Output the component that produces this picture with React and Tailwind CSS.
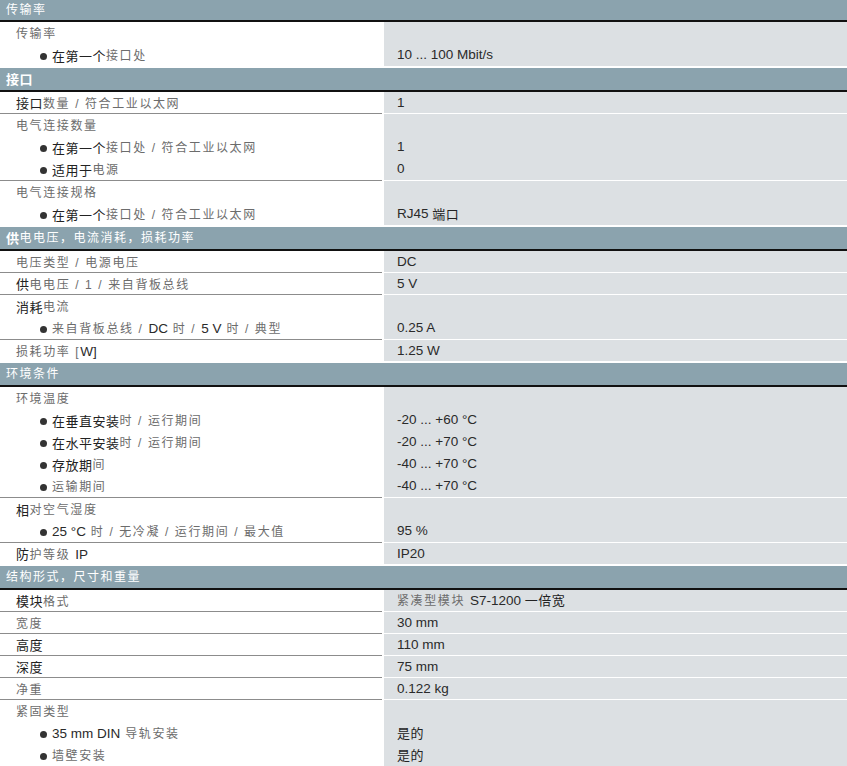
const sections = [
  {
    title: "传输率",
    first: true,
    groups: [
      [{ t: "传输率" }, { t: "{在第一个}接口处", b: true, v: "{10 ... 100 Mbit/s}" }],
    ],
  },
  {
    title: "{接口}",
    groups: [
      [{ t: "{接口}数量 / 符合工业以太网", v: "{1}" }],
      [
        { t: "电气连接数量" },
        { t: "{在第一个}接口处 / 符合工业以太网", b: true, v: "{1}" },
        { t: "{适用于}电源", b: true, v: "{0}" },
      ],
      [{ t: "电气连接规格" }, { t: "{在第一个}接口处 / 符合工业以太网", b: true, v: "{RJ45 端口}" }],
    ],
  },
  {
    title: "{供}电电压，电流消耗，损耗功率",
    groups: [
      [{ t: "电压类型 / 电源电压", v: "{DC}" }],
      [{ t: "{供}电电压 / 1 / 来自背板总线", v: "{5 V}" }],
      [{ t: "{消耗}电流" }, { t: "来自背板总线 / {DC} 时 / {5 V} 时 / 典型", b: true, v: "{0.25 A}" }],
      [{ t: "损耗功率 [{W]}", v: "{1.25 W}" }],
    ],
  },
  {
    title: "环境条件",
    groups: [
      [
        { t: "环境温度" },
        { t: "{在垂直安装}时 / 运行期间", b: true, v: "{-20 ... +60 °C}" },
        { t: "{在水平安装}时 / 运行期间", b: true, v: "{-20 ... +70 °C}" },
        { t: "{存放期}间", b: true, v: "{-40 ... +70 °C}" },
        { t: "运输期间", b: true, v: "{-40 ... +70 °C}" },
      ],
      [{ t: "{相}对空气湿度" }, { t: "{25 °C} 时 / 无冷凝 / 运行期间 / 最大值", b: true, v: "{95 %}" }],
      [{ t: "{防}护等级 {IP}", v: "{IP20}" }],
    ],
  },
  {
    title: "结构形式，尺寸和重量",
    groups: [
      [{ t: "{模块}格式", v: "紧凑型模块 {S7-1200 一倍宽}" }],
      [{ t: "宽度", v: "{30 mm}" }],
      [{ t: "{高度}", v: "{110 mm}" }],
      [{ t: "{深度}", v: "{75 mm}" }],
      [{ t: "净重", v: "{0.122 kg}" }],
      [
        { t: "紧固类型" },
        { t: "{35 mm DIN} 导轨安装", b: true, v: "{是的}" },
        { t: "墙壁安装", b: true, v: "{是的}" },
      ],
    ],
  },
];

// {..} = dark text, the rest is the thin grey font
function Rich({ text, header }) {
  const parts = text.split(/(\{[^}]*\})/).filter(Boolean);
  return parts.map((p, i) => {
    if (p.startsWith("{")) {
      const inner = p.slice(1, -1);
      const runs = inner.split(/([\u3000-\u9fff\uff00-\uffef]+)/).filter(Boolean);
      return runs.map((r, j) =>
        /[\u3000-\u9fff]/.test(r) ? (
          <span
            key={i + "-" + j}
            className={
              header
                ? "text-[13px] font-bold tracking-[0.5px] text-white"
                : "text-[13px] tracking-[0.5px] text-[#222]"
            }
          >
            {r}
          </span>
        ) : (
          <span key={i + "-" + j} className="text-[13.5px] text-[#2a2a2a] whitespace-pre">
            {r}
          </span>
        )
      );
    }
    return (
      <span
        key={i}
        className={
          header
            ? "text-[12px] tracking-[1.5px] text-white whitespace-pre"
            : "text-[12px] tracking-[1.6px] text-[#6c6c6c] whitespace-pre"
        }
      >
        {p}
      </span>
    );
  });
}

function Group({ lines, last }) {
  const single = lines.length === 1;
  const h = single ? "h-[21px]" : "h-[22px]";
  return (
    <div className="flex">
      <div className={"w-[382px] " + (last ? "" : "border-b border-[#8c8c8c]")}>
        {lines.map((l, i) => (
          <div key={i} className={"flex items-center pt-[2px] " + h + (l.b ? " pl-[40px]" : " pl-[16px]")}>
            {l.b && <span className="inline-block w-[7px] h-[7px] rounded-full bg-[#333] mr-[5px]" />}
            <Rich text={l.t} />
          </div>
        ))}
      </div>
      <div className={"flex-1 ml-[2px] bg-[#dce0e3] " + (last ? "" : "border-b border-white")}>
        {lines.map((l, i) => (
          <div key={i} className={"flex items-center pl-[13px] " + h}>
            {l.v && <Rich text={l.v} />}
          </div>
        ))}
      </div>
    </div>
  );
}

export default function App() {
  return (
    <div className="w-[847px] h-[766px] overflow-hidden bg-white font-['Liberation_Sans','Noto_Sans_CJK_SC',sans-serif] leading-none">
      {sections.map((s, si) => (
        <div key={si} className={si === 0 ? "" : "mt-[2px]"}>
          <div
            className={
              "flex items-center pl-[6px] bg-[#8ba3ae] border-b-2 border-[#111] " +
              (s.first ? "h-[22px]" : "h-[24px]")
            }
          >
            <Rich text={s.title} header />
          </div>
          {s.groups.map((g, gi) => (
            <Group key={gi} lines={g} last={gi === s.groups.length - 1} />
          ))}
        </div>
      ))}
    </div>
  );
}
